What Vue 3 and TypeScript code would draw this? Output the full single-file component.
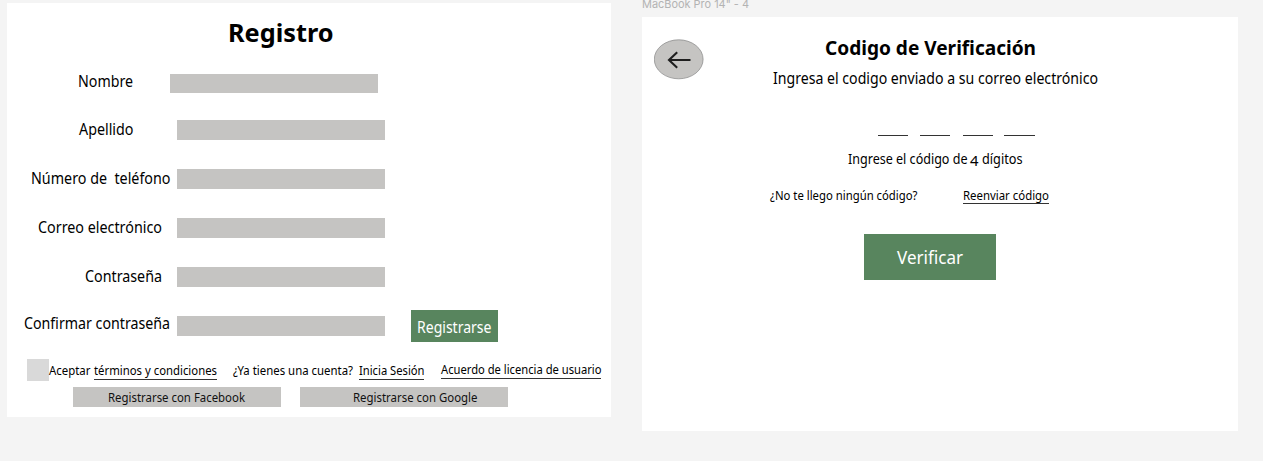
<script setup lang="ts">
import { h } from 'vue'

interface FitProps {
  text: string
  width: number
  size: number
  base: number
}

// One line of text, condensed to an exact width.
const FitText = (p: FitProps) =>
  h('svg', { class: 'fit', width: p.width, height: 20 }, [
    h(
      'text',
      {
        x: 0,
        y: p.base,
        'font-size': p.size,
        textLength: p.width,
        lengthAdjust: 'spacingAndGlyphs',
        fill: 'currentColor',
      },
      p.text,
    ),
  ])
FitText.props = ['text', 'width', 'size', 'base']

interface Field {
  id: string
  label: string
  width: number
  base: number
}

const fields: Field[] = [
  { id: 'nombre', label: 'Nombre', width: 55, base: 13.4 },
  { id: 'apellido', label: 'Apellido', width: 54.5, base: 15.3 },
  { id: 'telefono', label: 'Número de \u00a0teléfono', width: 139.5, base: 15.3 },
  { id: 'correo', label: 'Correo electrónico', width: 124, base: 15.2 },
  { id: 'contrasena', label: 'Contraseña', width: 77, base: 15.3 },
  { id: 'confirmar', label: 'Confirmar contraseña', width: 146, base: 13.3 },
]
</script>

<template>
  <main class="canvas">
    <section class="frame register">
      <h1 class="title"><FitText text="Registro" :width="105.5" :size="25.6" :base="15.4" /></h1>
      <div class="fields">
        <div v-for="f in fields" :key="f.id" class="row" :class="f.id">
          <label class="label"><FitText :text="f.label" :width="f.width" :size="16" :base="f.base" /></label>
          <div class="input"></div>
          <button v-if="f.id === 'confirmar'" class="green submit">
            <FitText text="Registrarse" :width="74.5" :size="16" :base="17.4" />
          </button>
        </div>
      </div>
      <div class="legal">
        <span class="check"></span>
        <FitText class="accept" text="Aceptar" :width="41.5" :size="13" :base="16.2" />
        <a class="link terms"><FitText text="términos y condiciones" :width="123" :size="13" :base="16.2" /></a>
        <FitText class="have" text="¿Ya tienes una cuenta?" :width="120" :size="13" :base="16.2" />
        <a class="link login"><FitText text="Inicia Sesión" :width="65.5" :size="13" :base="16.2" /></a>
        <a class="link license"><FitText text="Acuerdo de licencia de usuario" :width="160.5" :size="13" :base="16.4" /></a>
      </div>
      <div class="social">
        <button class="grey"><FitText text="Registrarse con Facebook" :width="137" :size="13" :base="14.7" /></button>
        <button class="grey google"><FitText text="Registrarse con Google" :width="124.5" :size="13" :base="14.7" /></button>
      </div>
    </section>

    <div class="second">
      <div class="frame-name"><FitText text="MacBook Pro 14&quot; - 4" :width="107" :size="11" :base="7.6" /></div>
      <section class="frame verify">
        <svg class="back" width="50" height="41" viewBox="0 0 50 41">
          <ellipse cx="24.7" cy="20.3" rx="24.4" ry="19.5" fill="#c5c4c2" stroke="#858585" stroke-width="0.7" />
          <path d="M36.5 21H15M23.2 13.2L15 21L23.2 28.7" fill="none" stroke="#1e1e1e" stroke-width="2.1" />
        </svg>
        <div class="content">
          <h2 class="heading"><FitText text="Codigo de Verificación" :width="211" :size="19" :base="16.4" /></h2>
          <FitText class="intro" text="Ingresa el codigo enviado a su correo electrónico" :width="325" :size="16" :base="15.3" />
          <div class="digits"><i></i><i></i><i></i><i></i></div>
          <div class="hint">
            <FitText text="Ingrese el código de" :width="119.5" :size="14.3" :base="15" />
            <FitText class="four" text="4" :width="8.5" :size="13.5" :base="16.5" />
            <FitText class="digit-word" text="dígitos" :width="40.5" :size="14.3" :base="15" />
          </div>
          <div class="resend">
            <FitText text="¿No te llego ningún código?" :width="147.5" :size="13" :base="15.7" />
            <a class="link again"><FitText text="Reenviar código" :width="86" :size="13" :base="15.7" /></a>
          </div>
          <button class="green confirm"><FitText text="Verificar" :width="66" :size="18.5" :base="16.2" /></button>
        </div>
      </section>
    </div>
  </main>
</template>

<style>
body {
  background: #f4f4f4;
}
</style>

<style scoped>
.canvas {
  width: 1263px;
  height: 461px;
  display: flex;
  overflow: hidden;
  background: #f4f4f4;
  color: #000;
  font-family: 'Noto Sans', sans-serif;
}
.fit {
  display: block;
  flex: none;
  overflow: visible;
}
button {
  display: flex;
  flex: none;
  border: 0;
  padding: 0;
  font-family: inherit;
}
h1, h2 {
  margin: 0;
  font-weight: 700;
}
.frame {
  background: #fff;
  box-sizing: border-box;
}
.register {
  width: 604.5px;
  height: 414px;
  margin: 3px 0 0 6.5px;
}
.title {
  padding: 24px 0 0 221.5px;
}
.fields {
  padding-top: 26.5px;
}
.row {
  display: flex;
  height: 20px;
  margin-bottom: 29px;
}
.label {
  width: 170.5px;
  box-sizing: border-box;
}
.nombre {
  margin-bottom: 26.5px;
}
.nombre .label {
  width: 163.5px;
}
.nombre .label {
  padding-left: 71.2px;
}
.apellido .label {
  padding-left: 72px;
}
.telefono .label {
  padding-left: 24.2px;
}
.correo .label {
  padding-left: 31.7px;
}
.contrasena .label {
  padding-left: 78.4px;
}
.confirmar .label {
  padding-left: 17.5px;
}
.confirmar {
  margin-bottom: 0;
}
.input {
  width: 208.3px;
  height: 19.7px;
  background: #c5c4c2;
}
.green {
  background: #58855e;
  color: #fff;
}
.submit {
  width: 87px;
  height: 32.5px;
  margin: -6.5px 0 0 25.7px;
  padding: 6.2px 0 0 6.2px;
}
.legal {
  display: flex;
  height: 22px;
  margin-top: 23px;
  padding-left: 20.8px;
}
.check {
  width: 21.7px;
  height: 22px;
  background: #d9d9d9;
}
.link {
  flex: none;
  height: 20px;
  border-bottom: 1px solid #333;
}
.accept {
  margin-left: 0.3px;
}
.terms {
  margin-left: 3px;
}
.have {
  margin-left: 16.3px;
}
.login {
  margin-left: 5.7px;
}
.license {
  margin: -0.9px 0 0 16.3px;
}
.social {
  display: flex;
  gap: 19px;
  margin-top: 6px;
  padding-left: 66.3px;
}
.grey {
  width: 208.3px;
  height: 19.7px;
  padding-left: 35.3px;
  background: #c5c4c2;
  color: #111;
}
.google {
  padding-left: 53.2px;
}
.second {
  margin-left: 30.5px;
}
.frame-name {
  height: 16.5px;
  color: #b3b3b3;
  font-family: Inter, sans-serif;
}
.verify {
  display: flex;
  width: 596.5px;
  height: 414px;
}
.back {
  flex: none;
  margin: 22px 0 0 12.3px;
}
.content {
  padding: 22.5px 0 0 66.2px;
}
.heading {
  padding-left: 55px;
}
.intro {
  margin: 10px 0 0 3.5px;
}
.digits {
  display: flex;
  margin: 46px 0 0 108px;
}
.digits i {
  width: 30.5px;
  height: 1px;
  margin-right: 11.2px;
  background: #333;
}
.digits i:nth-child(2) {
  margin-right: 12.8px;
}
.digits i:nth-child(3) {
  margin-right: 11px;
}
.hint {
  display: flex;
  margin: 13px 0 0 77.8px;
}
.four {
  margin-left: 3.2px;
}
.digit-word {
  margin-left: 3.2px;
}
.resend {
  display: flex;
  margin-top: 15px;
}
.resend .link {
  height: 19px;
}
.again {
  margin-left: 45.2px;
}
.confirm {
  width: 131.5px;
  height: 46.2px;
  margin: 30.3px 0 0 94.5px;
  padding: 13.8px 0 0 32.5px;
}
</style>
